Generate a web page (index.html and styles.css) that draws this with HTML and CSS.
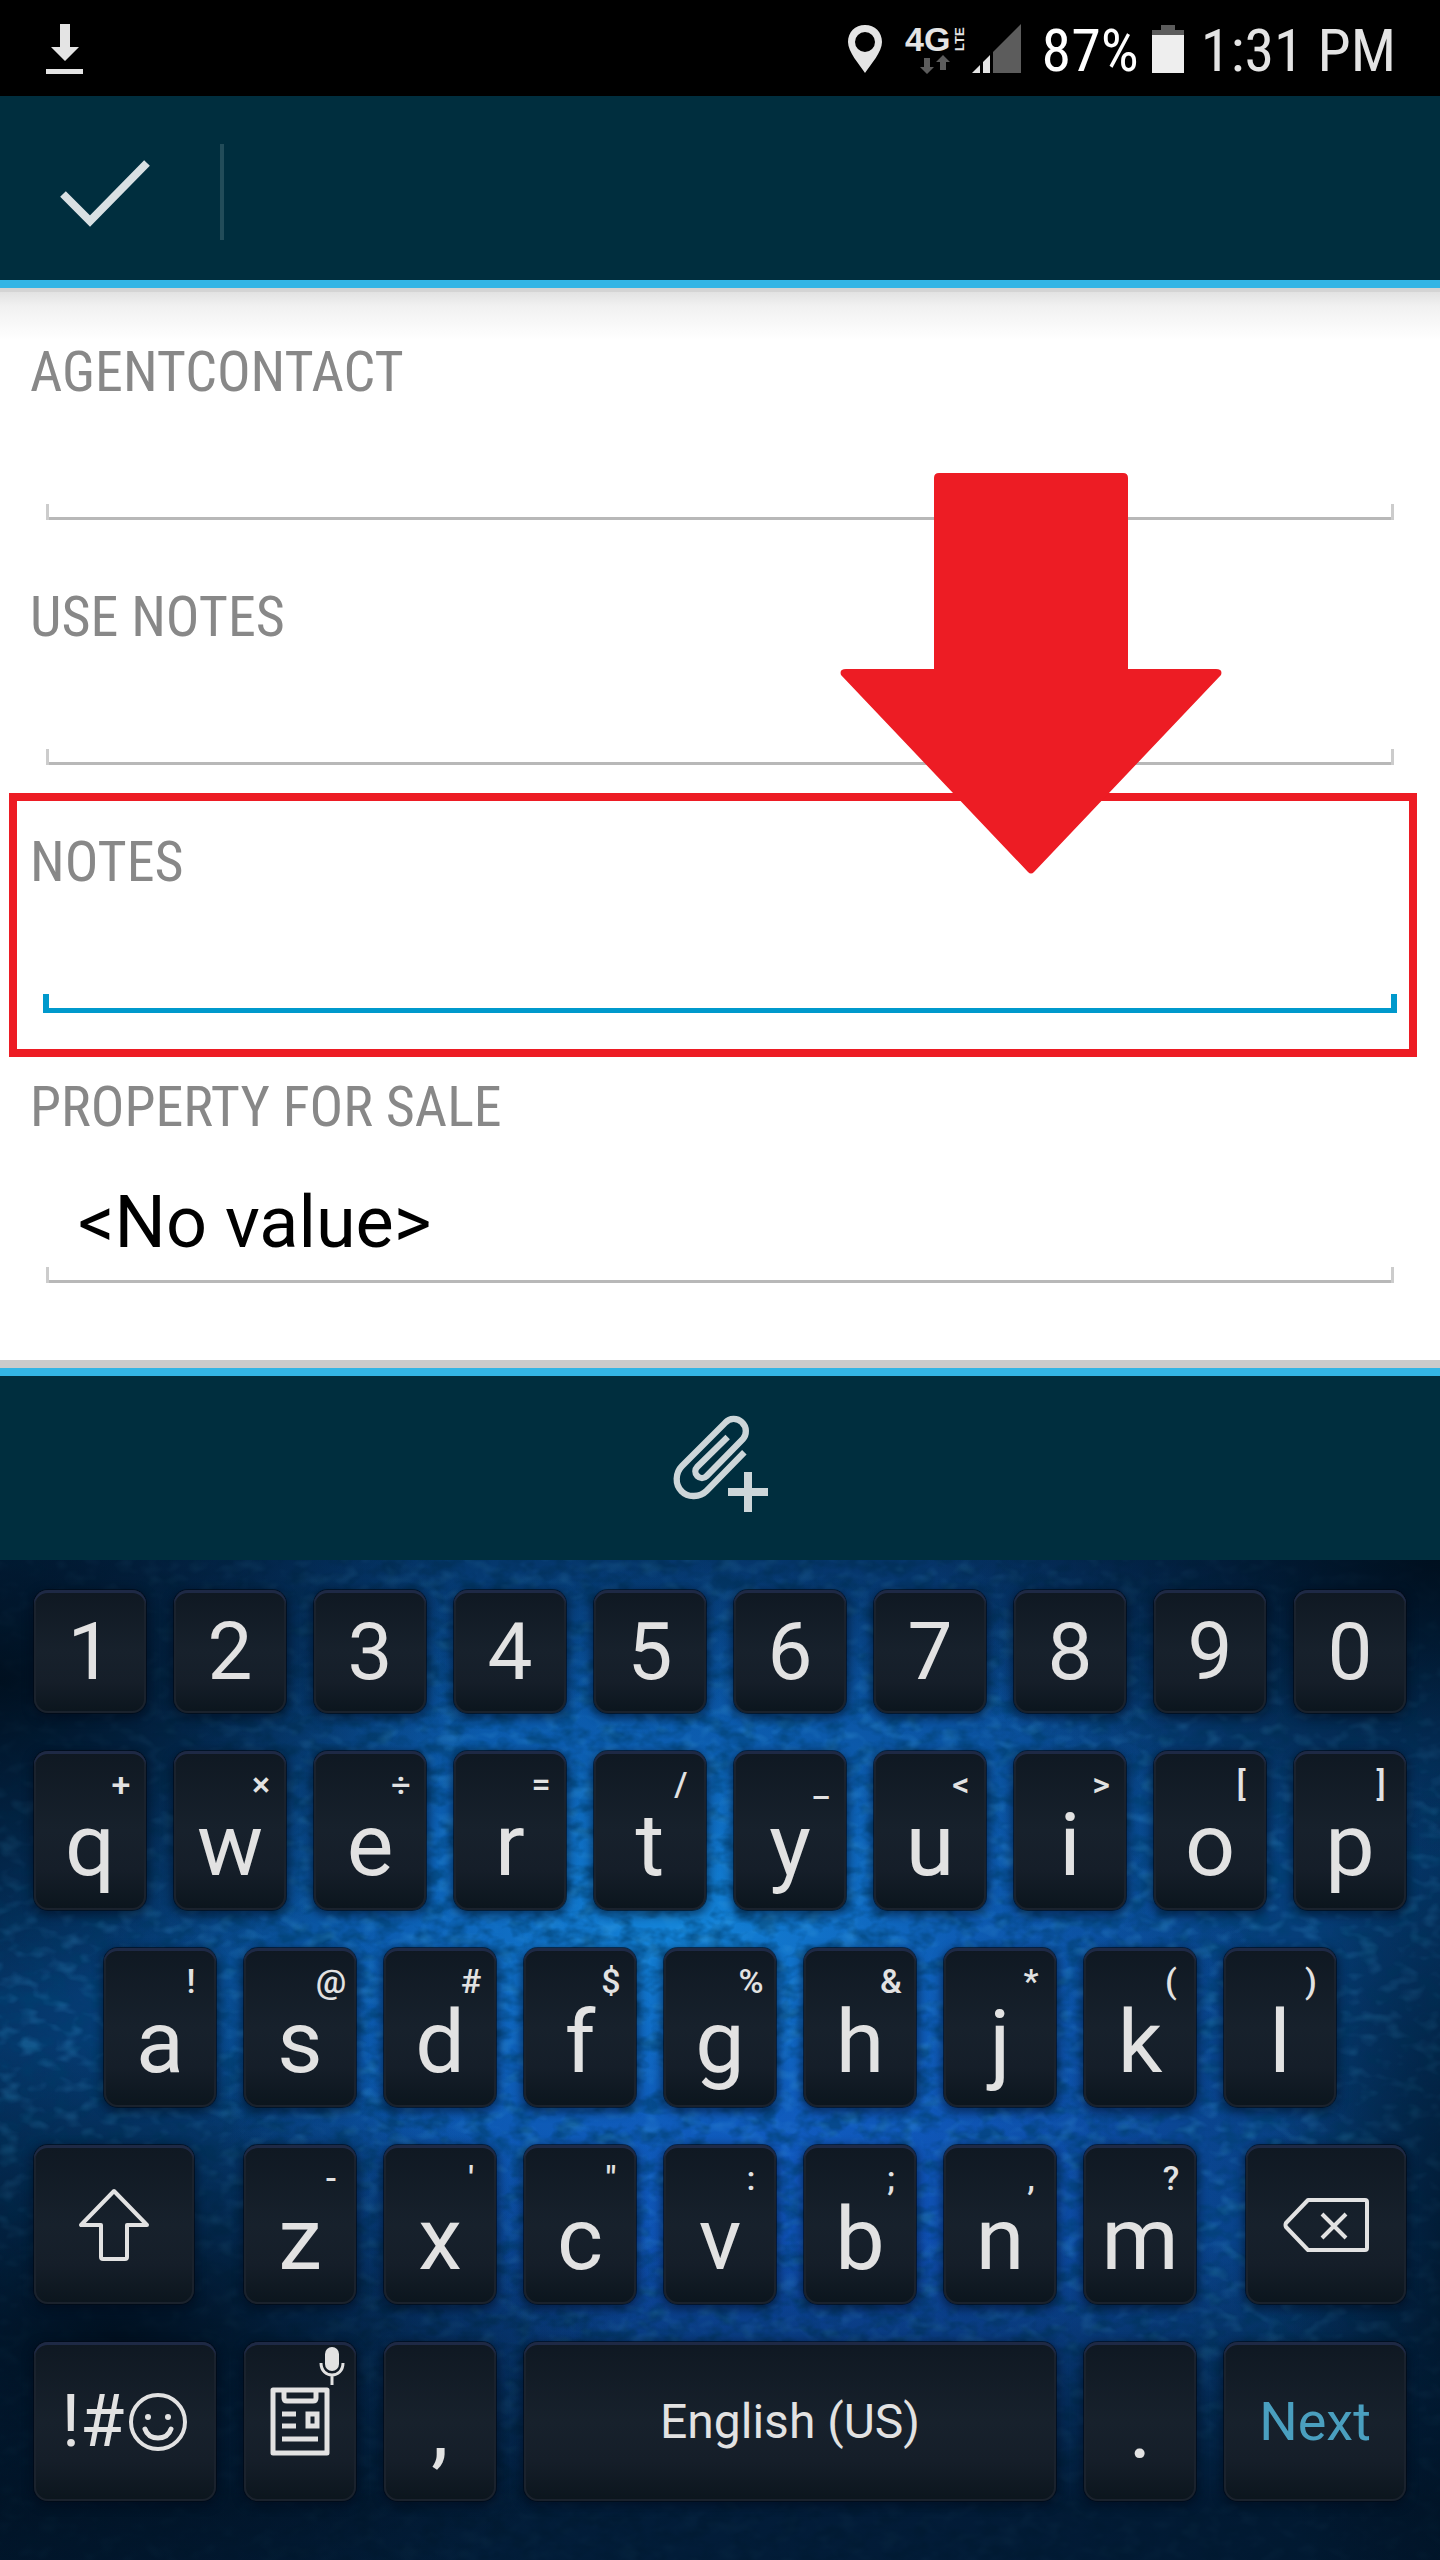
FILE: index.html
```html
<!DOCTYPE html>
<html lang="en">
<head>
<meta charset="utf-8">
<meta name="viewport" content="width=device-width, initial-scale=1">
<title>Edit entry</title>
<link rel="stylesheet" href="styles.css">
</head>
<body>
<header class="status">
  <svg class="status-download" width="38" height="50" viewBox="0 0 38 50" fill="#e4e4e4" aria-label="Download"><path d="M14 0h10v23h9L19 37 5 23h9zM0 45h37v5H0z"/></svg>
  <svg class="status-pin" width="36" height="50" viewBox="0 0 36 50" fill="#e4e4e4" aria-label="Location"><path fill-rule="evenodd" d="M18 1C8 1 1 8 1 18c0 10 11 22 17 31 6-9 17-21 17-31C35 8 28 1 18 1zm0 7a10 10 0 1 1 0 20 10 10 0 0 1 0-20z"/></svg>
  <svg class="status-network" width="62" height="50" viewBox="0 0 62 50" fill="#e4e4e4"><text class="net-main" x="0" y="27">4G</text><text class="net-sub" transform="translate(59 27) rotate(-90)">LTE</text><path fill="#5c5c5c" d="M19 34h6v9h4l-7 7-7-7h4zM35 46v-8h-4l7-7 7 7h-4v8z"/></svg>
  <svg class="status-signal" width="50" height="50" viewBox="0 0 50 50"><path fill="#5c5c5c" d="M49 0v49H21V28z"/><path fill="#e4e4e4" d="M0 49l8-8v8zM11 49V38l7-7v18z"/></svg>
  <span class="status-text status-percent">87%</span>
  <svg class="status-battery" width="32" height="50" viewBox="0 0 32 50"><path fill="#5c5c5c" d="M9 1h14v5h9v6H0V6h9z"/><path fill="#eee" d="M0 11h32v38H0z"/></svg>
  <span class="status-text status-time">1:31 PM</span>
</header>
<div class="appbar">
  <button class="appbar-done" type="button" aria-label="Done"><svg width="92" height="68" viewBox="0 0 92 68" fill="none" stroke="#d9e0e3" stroke-width="8"><path d="M4 34l27 27 57-58"/></svg></button>
</div>
<main class="form">
  <div class="field"><label for="agent">AGENTCONTACT</label><input id="agent" type="text"></div>
  <div class="field"><label for="use">USE NOTES</label><input id="use" type="text"></div>
  <div class="field field-marked"><label for="notes">NOTES</label><input id="notes" class="is-active" type="text">
    <svg class="pointer" width="382" height="402" viewBox="0 0 382 402" fill="#ed1c24"><path d="M99 0h184q5 0 5 5v191h88q7 0 5 6L194 399q-3 3-6 0L1 202q-2-6 5-6h88V5q0-5 5-5z"/></svg>
  </div>
  <div class="field field-choice"><label for="sale">PROPERTY FOR SALE</label><select id="sale"><option>&lt;No value&gt;</option></select></div>
</main>
<div class="attachbar">
  <button type="button" aria-label="Add attachment"><svg width="98" height="108" viewBox="213 222 294 324"><path fill="none" stroke="#cdd6d9" stroke-width="19" d="M433 337L320 452C300 472 264 474 245 454 224 434 226 398 246 378L376 248C389 233 412 233 426 247 441 261 441 284 428 298L320 408C312 416 300 416 292 408 284 400 284 388 292 380L383 291"/><path fill="#cdd6d9" d="M432 396h24v48h48v24h-48v48h-24v-48h-48v-24h48z"/></svg></button>
</div>
<section class="keyboard" aria-label="Keyboard">
  <svg class="texture" aria-hidden="true">
    <filter id="ripple" x="0" y="0" width="100%" height="100%">
      <feTurbulence type="fractalNoise" baseFrequency="0.045 0.065" numOctaves="3" seed="8"/>
      <feColorMatrix values="0 0 0 0 0  0 0 0 0 0.05  0 0 0 0 0.16  3 0 0 0 -1.25"/>
    </filter>
    <filter id="glint" x="0" y="0" width="100%" height="100%">
      <feTurbulence type="fractalNoise" baseFrequency="0.05 0.075" numOctaves="2" seed="21"/>
      <feColorMatrix values="0 0 0 0 0.06  0 0 0 0 0.42  0 0 0 0 0.82  3 0 0 0 -1.5"/>
    </filter>
    <rect class="texture-dark" width="100%" height="100%" filter="url(#ripple)"/>
    <rect class="texture-light" width="100%" height="100%" filter="url(#glint)"/>
  </svg>
  <div class="row row-digits">
    <button class="key">1</button><button class="key">2</button><button class="key">3</button><button class="key">4</button><button class="key">5</button><button class="key">6</button><button class="key">7</button><button class="key">8</button><button class="key">9</button><button class="key">0</button>
  </div>
  <div class="row">
    <button class="key letter">q<span class="alt">+</span></button><button class="key letter">w<span class="alt">×</span></button><button class="key letter">e<span class="alt">÷</span></button><button class="key letter">r<span class="alt">=</span></button><button class="key letter">t<span class="alt">/</span></button><button class="key letter">y<span class="alt">_</span></button><button class="key letter">u<span class="alt">&lt;</span></button><button class="key letter">i<span class="alt">&gt;</span></button><button class="key letter">o<span class="alt">[</span></button><button class="key letter">p<span class="alt">]</span></button>
  </div>
  <div class="row row-home">
    <button class="key letter">a<span class="alt">!</span></button><button class="key letter">s<span class="alt">@</span></button><button class="key letter">d<span class="alt">#</span></button><button class="key letter">f<span class="alt">$</span></button><button class="key letter">g<span class="alt">%</span></button><button class="key letter">h<span class="alt">&amp;</span></button><button class="key letter">j<span class="alt">*</span></button><button class="key letter">k<span class="alt">(</span></button><button class="key letter">l<span class="alt">)</span></button>
  </div>
  <div class="row">
    <button class="key key-shift" aria-label="Shift"><svg width="72" height="74" viewBox="0 0 72 74" fill="none" stroke="#e2e2e2" stroke-width="4" stroke-linejoin="round"><path d="M36 3L3 37h20v32q0 2 2 2h22q2 0 2-2V37h20z"/></svg></button>
    <button class="key letter">z<span class="alt">-</span></button><button class="key letter">x<span class="alt">'</span></button><button class="key letter">c<span class="alt">"</span></button><button class="key letter">v<span class="alt">:</span></button><button class="key letter">b<span class="alt">;</span></button><button class="key letter">n<span class="alt">,</span></button><button class="key letter">m<span class="alt">?</span></button>
    <button class="key key-erase" aria-label="Backspace"><svg width="86" height="56" viewBox="0 0 86 56" fill="none" stroke="#e2e2e2" stroke-width="4" stroke-linejoin="round"><path d="M25 3h57q2 0 2 2v46q0 2-2 2H25L3 30q-1-2 0-4z"/><path d="M39 17l24 24M63 17L39 41"/></svg></button>
  </div>
  <div class="row">
    <button class="key key-symbols" aria-label="Symbols and emoji">!#<svg width="60" height="60" viewBox="0 0 60 60" fill="none" stroke="#e2e2e2" stroke-width="4"><circle cx="30" cy="30" r="27"/><path stroke-linecap="round" stroke-width="5" d="M17 37q3 9 13 9t13-9"/><circle cx="20" cy="25" r="3" fill="#e2e2e2" stroke="none"/><circle cx="40" cy="25" r="3" fill="#e2e2e2" stroke="none"/></svg></button>
    <button class="key" aria-label="Clipboard"><svg width="62" height="70" viewBox="0 0 62 70" fill="none" stroke="#e2e2e2" stroke-width="5" stroke-linejoin="round"><path d="M4 3h54v63H4zM15 3v8q0 3 3 3h26q3 0 3-3V3M13 27h14M13 39h14M13 52h36"/><path stroke-linejoin="miter" d="M39 27h9v12h-9z"/></svg>
      <svg class="mic" width="26" height="38" viewBox="0 0 26 38" fill="#e2e2e2"><rect x="6" y="0" width="14" height="24" rx="7"/><path fill="none" stroke="#e2e2e2" stroke-width="3" d="M2 16c0 16 22 16 22 0M13 28v10"/></svg></button>
    <button class="key key-point">,</button>
    <button class="key key-space">English (US)</button>
    <button class="key key-point">.</button>
    <button class="key key-next">Next</button>
  </div>
</section>
</body>
</html>
```
FILE: styles.css
```css
* { box-sizing: border-box; }

body {
  margin: 0;
  min-height: 100vh;
  display: flex;
  flex-direction: column;
  background: #fff;
  font-family: Roboto, "Liberation Sans", sans-serif;
}

button, input, select { font: inherit; border: 0; margin: 0; padding: 0; background: none; outline: 0; }
svg { display: block; flex: none; }

.status {
  display: flex;
  align-items: center;
  height: 96px;
  padding: 2px 44px 0 46px;
  background: #000;
  color: #e4e4e4;
}
.status-text { padding-top: 4px; font-family: "Roboto Condensed", "Liberation Sans Narrow", Roboto, sans-serif; font-size: 60px; line-height: 72px; white-space: nowrap; }
.status-pin { margin-left: auto; }
.status-network { margin-left: 22px; overflow: visible; }
.status-signal { margin-left: 5px; }
.status-percent { margin-left: 20px; color: #fff; }
.status-battery { margin: 0 17px 0 13px; }
.net-main { font: bold 34px "Liberation Sans", sans-serif; }
.net-sub { font: bold 13px "Liberation Sans", sans-serif; }

.appbar {
  display: flex;
  align-items: center;
  height: 192px;
  padding-top: 8px;
  background: #002e3e;
  border-bottom: 8px solid #33b5e5;
}
.appbar-done {
  height: 96px;
  width: 224px;
  padding: 4px 0 0 59px;
  border-right: 4px solid #224c59;
}

.form {
  flex: 1;
  display: flex;
  flex-direction: column;
  gap: 58px;
  padding: 48px 43px 74px;
  background: linear-gradient(#d4d4d4 4px, #e2e2e2 4px, #f1f1f1 18px, #fff 52px);
  border-bottom: 8px solid #cbcbcb;
}
.field { display: flex; flex-direction: column; gap: 12px; }
.field label {
  margin-left: -13px;
  font-family: "Roboto Condensed", "Liberation Sans Narrow", Roboto, sans-serif;
  font-size: 56px;
  line-height: 72px;
  color: #888;
}
.field input, .field select {
  width: 100%;
  height: 103px;
  padding: 0 35px;
  font-size: 72px;
  color: #000;
  appearance: none;
  background:
    linear-gradient(#ccc, #ccc) 3px calc(100% - 3px) / 3px 16px no-repeat,
    linear-gradient(#ccc, #ccc) calc(100% - 3px) calc(100% - 3px) / 3px 16px no-repeat,
    linear-gradient(#b8b8b8, #b8b8b8) 50% calc(100% - 3px) / calc(100% - 6px) 3px no-repeat;
}
.field select { height: 131px; padding-top: 4px; }
.field input.is-active {
  background:
    linear-gradient(#0099cc, #0099cc) 0 100% / 6px 19px no-repeat,
    linear-gradient(#0099cc, #0099cc) 100% 100% / 6px 19px no-repeat,
    linear-gradient(#0099cc, #0099cc) 0 100% / 100% 5px no-repeat;
}

/* red callout around the notes field */
.field-marked { position: relative; }
.field-marked::after {
  content: "";
  position: absolute;
  inset: -33px -20px -44px -34px;
  border: 8px solid #ed1c24;
  pointer-events: none;
}
.pointer { position: absolute; right: 175px; bottom: 138px; pointer-events: none; z-index: 1; }

.attachbar {
  display: flex;
  align-items: center;
  justify-content: center;
  height: 192px;
  background: #002e3e;
  border-top: 8px solid #33b5e5;
}

.keyboard {
  position: relative;
  isolation: isolate;
  display: flex;
  flex-direction: column;
  gap: 38px;
  padding: 30px 34px 59px;
  background:
    radial-gradient(ellipse 40% 36% at 47% 36%, rgba(20, 138, 222, .9), rgba(16, 108, 198, .5) 50%, transparent),
    radial-gradient(ellipse 40% 40% at 55% 60%, rgba(18, 80, 190, .9), transparent),
    linear-gradient(90deg, #053668, #08509c 30%, #094a94 65%, #05396e);
}
.keyboard::before {
  content: "";
  position: absolute;
  inset: 0;
  background:
    radial-gradient(ellipse 34% 32% at 0% 12%, rgba(0, 14, 28, .95), transparent),
    radial-gradient(ellipse 36% 30% at 100% 0%, rgba(0, 14, 28, .95), transparent),
    radial-gradient(ellipse 36% 30% at 8% 78%, rgba(0, 14, 28, .95), transparent),
    radial-gradient(ellipse 14% 50% at 102% 70%, rgba(0, 14, 28, .8), transparent),
    linear-gradient(rgba(0, 20, 40, .4), transparent 16%, transparent 68%, rgba(0, 16, 32, .8) 94%);
}
.texture { position: absolute; inset: 0; width: 100%; height: 100%; z-index: -1; }
.texture-dark { opacity: .6; }
.texture-light { opacity: .25; }

.row { position: relative; display: flex; gap: 28px; height: 159px; }
.row-digits { height: 123px; font-size: 80px; }
.row-home { padding: 0 70px; }

.key {
  position: relative;
  flex: 112 1 0;
  min-width: 0;
  display: flex;
  align-items: center;
  justify-content: center;
  color: #e2e2e2;
  line-height: 1;
  border-radius: 14px;
  background: linear-gradient(#0f1822, #17212c 50%, #151e29 75%, #0b151d);
  box-shadow:
    inset 0 3px #1e2945,
    inset 0 0 0 2px #1a222d,
    0 0 0 1px rgba(0, 8, 20, .6),
    0 3px 8px 3px rgba(0, 10, 26, .5);
}
.letter { font-size: 88px; padding-top: 28px; }
.alt {
  position: absolute;
  top: 0;
  right: 0;
  width: 50px;
  font-size: 34px;
  font-weight: 500;
  line-height: 66px;
  text-align: center;
}
.key-shift { flex-grow: 160; margin-right: 22px; }
.key-erase { flex-grow: 160; margin-left: 22px; }
.key-symbols { flex-grow: 182; gap: 4px; font-size: 72px; }
.key-point { font-size: 88px; padding-top: 10px; }
.key-space { flex-grow: 532; font-size: 48px; }
.key-next { flex-grow: 182; font-size: 54px; color: #4a9fbf; }
.mic { position: absolute; top: 5px; right: 11px; }
```
